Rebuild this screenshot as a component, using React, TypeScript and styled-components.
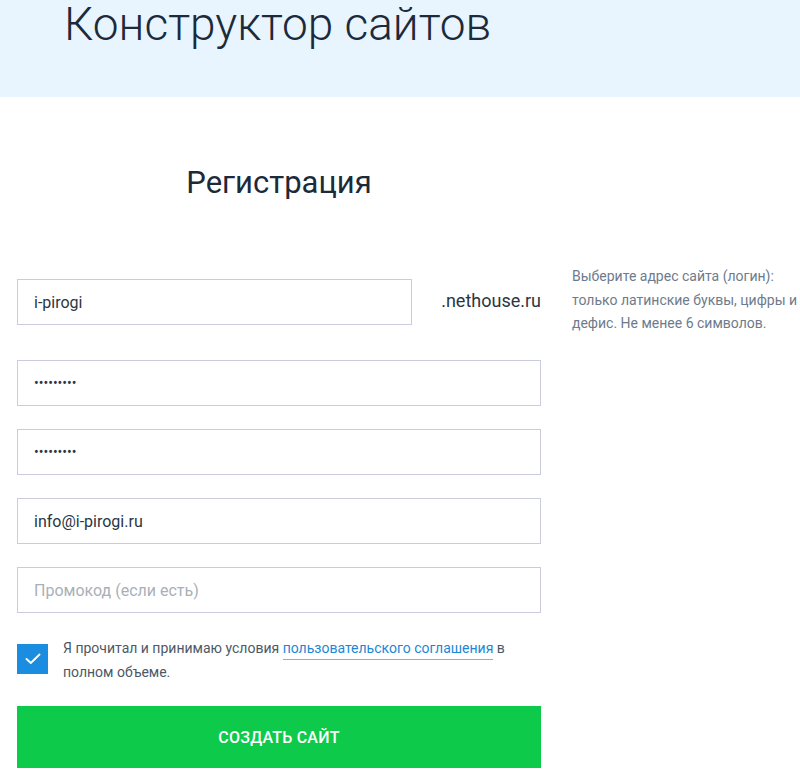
import React from 'react';
import styled, { createGlobalStyle } from 'styled-components';

const colors = {
  headerBg: '#e8f4fe',
  navy: '#1c2a3a',
  text: '#2b3643',
  muted: '#6e7b8b',
  label: '#4d5866',
  border: '#cbcbe0',
  placeholder: '#a9b0b9',
  blue: '#1a8de0',
  link: '#1b88d6',
  linkLine: '#6cb8f2',
  green: '#0dca4b',
  white: '#ffffff',
};

const GlobalStyle = createGlobalStyle`
  * {
    box-sizing: border-box;
  }

  body {
    margin: 0;
    background: ${colors.white};
    font-family: Roboto, 'Noto Sans', 'Liberation Sans', sans-serif;
    color: ${colors.text};
  }
`;

export default function App() {
  const [agreed, setAgreed] = React.useState(true);

  return (
    <>
      <GlobalStyle />
      <Header>
        <Title>Конструктор сайтов</Title>
      </Header>

      <Main>
        <Form onSubmit={(e) => e.preventDefault()}>
          <FormTitle>Регистрация</FormTitle>

          <DomainRow>
            <DomainInput type="text" value="i-pirogi" readOnly />
            <DomainSuffix>.nethouse.ru</DomainSuffix>
          </DomainRow>

          <Fields>
            <Field type="password" value="123456789" $masked readOnly />
            <Field type="password" value="123456789" $masked readOnly />
            <Field type="email" value="info@i-pirogi.ru" readOnly />
            <Field type="text" placeholder="Промокод (если есть)" />
          </Fields>

          <AgreeRow>
            <CheckBox
              type="button"
              $checked={agreed}
              onClick={() => setAgreed(!agreed)}
              aria-pressed={agreed}
            >
              {agreed && (
                <svg width="16" height="12" viewBox="0 0 16 12" fill="none">
                  <path
                    d="M1.5 6 L5.8 10 L14.5 1.5"
                    stroke="#fff"
                    strokeWidth="1.9"
                    strokeLinecap="round"
                    strokeLinejoin="round"
                  />
                </svg>
              )}
            </CheckBox>
            <AgreeText>
              Я прочитал и принимаю условия{' '}
              <AgreeLink href="#">пользовательского соглашения</AgreeLink> в
              полном объеме.
            </AgreeText>
          </AgreeRow>

          <SubmitButton type="submit">Создать сайт</SubmitButton>
        </Form>

        <Hint>
          Выберите адрес сайта (логин): только латинские буквы, цифры и дефис.
          Не менее 6 символов.
        </Hint>
      </Main>
    </>
  );
}

const Header = styled.header`
  height: 97px;
  background: ${colors.headerBg};
  padding: 1px 0 0 64px;
`;

const Title = styled.h1`
  margin: 0;
  font-size: 46px;
  line-height: 46px;
  font-weight: 300;
  color: ${colors.navy};
`;

const Main = styled.main`
  display: flex;
  align-items: flex-start;
  padding-left: 17px;
`;

const Form = styled.form`
  flex: none;
  width: 524px;
  display: flex;
  flex-direction: column;
`;

const FormTitle = styled.h2`
  margin: 70px 0 81px;
  text-align: center;
  font-size: 31px;
  line-height: 31px;
  font-weight: 400;
  color: ${colors.navy};
`;

const DomainRow = styled.div`
  display: flex;
  align-items: center;
  justify-content: space-between;
`;

const Field = styled.input<{ $masked?: boolean }>`
  display: block;
  width: 100%;
  height: 46px;
  padding: 0 16px;
  border: 1px solid ${colors.border};
  border-radius: 0;
  background: ${colors.white};
  font-family: Roboto, 'Noto Sans', 'Liberation Sans', sans-serif;
  font-size: ${(p) => (p.$masked ? '14px' : '16px')};
  color: ${colors.text};
  outline: none;

  &::placeholder {
    color: ${colors.placeholder};
  }

  &:focus {
    border-color: ${colors.blue};
  }
`;

const DomainInput = styled(Field)`
  width: 395px;
`;

const DomainSuffix = styled.span`
  font-size: 18px;
  color: ${colors.text};
  margin-top: -3px;
`;

const Fields = styled.div`
  display: flex;
  flex-direction: column;
  gap: 23px;
  margin-top: 35px;
`;

const AgreeRow = styled.div`
  display: flex;
  align-items: flex-start;
  gap: 15px;
  margin-top: 31px;
`;

const CheckBox = styled.button<{ $checked: boolean }>`
  flex: none;
  width: 31px;
  height: 30px;
  padding: 0;
  display: flex;
  align-items: center;
  justify-content: center;
  border: 1px solid ${(p) => (p.$checked ? colors.blue : colors.border)};
  background: ${(p) => (p.$checked ? colors.blue : colors.white)};
  cursor: pointer;
`;

const AgreeText = styled.p`
  margin: -8px 0 0;
  font-size: 14px;
  line-height: 24px;
  color: ${colors.label};
`;

const AgreeLink = styled.a`
  color: ${colors.link};
  text-decoration: none;
  padding-bottom: 3px;
  border-bottom: 1px solid ${colors.linkLine};
`;

const SubmitButton = styled.button`
  margin-top: 22px;
  height: 62px;
  border: none;
  background: ${colors.green};
  color: ${colors.white};
  font-family: Roboto, 'Noto Sans', 'Liberation Sans', sans-serif;
  font-size: 16px;
  font-weight: 500;
  text-transform: uppercase;
  letter-spacing: 0.2px;
  cursor: pointer;
`;

const Hint = styled.p`
  width: 232px;
  margin: 168px 0 0 31px;
  font-size: 14px;
  line-height: 23.5px;
  color: ${colors.muted};
`;
